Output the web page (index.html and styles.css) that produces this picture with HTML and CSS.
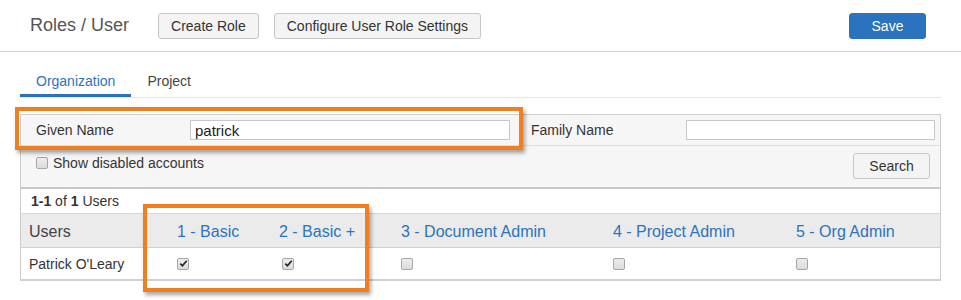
FILE: index.html
```html
<!DOCTYPE html>
<html>
<head>
  <title>Roles / User</title>
  <link rel="stylesheet" href="styles.css">
</head>
<body>
  <div class="page-header">
    <h1 class="page-title">Roles / User</h1>
    <button class="btn">Create Role</button>
    <button class="btn">Configure User Role Settings</button>
    <button class="btn btn-primary">Save</button>
  </div>

  <div class="tabs">
    <a class="tab active">Organization</a>
    <a class="tab">Project</a>
  </div>

  <div class="filter-panel">
    <div class="filter-row names">
      <label class="field-label">Given Name</label>
      <input class="field-input" type="text" value="patrick">
      <label class="field-label second">Family Name</label>
      <input class="field-input" type="text">
    </div>
    <div class="filter-row options">
      <label class="check-label"><span class="cb"></span>Show disabled accounts</label>
      <button class="btn btn-search">Search</button>
    </div>
  </div>

  <div class="results">
    <div class="results-count"><b>1-1</b> of <b>1</b> Users</div>
    <div class="role-grid head">
      <div class="cell user-col">Users</div>
      <div class="cell role">1 - Basic</div>
      <div class="cell role">2 - Basic +</div>
      <div class="cell role">3 - Document Admin</div>
      <div class="cell role">4 - Project Admin</div>
      <div class="cell role">5 - Org Admin</div>
    </div>
    <div class="role-grid body">
      <div class="cell user-col">Patrick O'Leary</div>
      <div class="cell"><span class="cb checked"><svg viewBox="0 0 10 10" width="9" height="9"><path d="M1.5 5.2 L3.8 7.6 L8.6 2" fill="none" stroke="#222" stroke-width="1.8"/></svg></span></div>
      <div class="cell second-cb"><span class="cb checked"><svg viewBox="0 0 10 10" width="9" height="9"><path d="M1.5 5.2 L3.8 7.6 L8.6 2" fill="none" stroke="#222" stroke-width="1.8"/></svg></span></div>
      <div class="cell"><span class="cb"></span></div>
      <div class="cell"><span class="cb"></span></div>
      <div class="cell"><span class="cb"></span></div>
    </div>
  </div>

  <!-- annotation boxes drawn over the screenshot -->
  <div class="highlight hl-name"></div>
  <div class="highlight hl-roles"></div>
</body>
</html>
```

FILE: styles.css
```css
* {
  margin: 0;
  padding: 0;
  box-sizing: border-box;
}

body {
  font-family: "Liberation Sans", Arial, sans-serif;
  font-size: 14px;
  color: #333333;
  background-color: #ffffff;
  position: relative;
  width: 961px;
  height: 300px;
  overflow: hidden;
}

.page-header {
  display: flex;
  align-items: center;
  height: 52px;
  padding: 0 35px 0 30px;
  border-bottom: 1px solid #d0d0d0;
}

.page-title {
  font-size: 18px;
  font-weight: normal;
  color: #555555;
  margin-right: 29px;
  margin-top: -1px;
}

.btn {
  font-family: "Liberation Sans", Arial, sans-serif;
  font-size: 14px;
  color: #333333;
  height: 26px;
  padding: 0 12px;
  background-color: #f4f4f4;
  border: 1px solid #c6c6c6;
  border-radius: 3px;
  margin-right: 15px;
}

.btn-primary {
  margin-left: auto;
  margin-right: 0;
  width: 77px;
  background-color: #2b73bf;
  border-color: #2b73bf;
  color: #ffffff;
}

.tabs {
  display: flex;
  margin: 0 20px;
  padding-top: 21px;
  border-bottom: 1px solid #e6e6e6;
}

.tab {
  line-height: 17px;
  padding: 0 16px 4px;
  border-bottom: 3px solid transparent;
  color: #444444;
}

.tab.active {
  color: #2b73bf;
  border-bottom-color: #2b73bf;
}

.filter-panel {
  margin: 16px 20px 0;
  border: 1px solid #cccccc;
  border-bottom: 2px solid #c8c8c8;
  background-color: #f6f6f6;
}

.filter-row.names {
  display: grid;
  grid-template-columns: 169px 320px 176px 249px;
  align-items: center;
  height: 31px;
  border-bottom: 1px solid #dddddd;
}

.field-label {
  padding-left: 15px;
  color: #333333;
}

.field-label.second {
  padding-left: 21px;
}

.field-input {
  height: 20px;
  border: 1px solid #c8c8c8;
  background-color: #ffffff;
  font-family: "Liberation Sans", Arial, sans-serif;
  font-size: 15px;
  color: #222222;
  padding: 0 4px;
  outline: none;
}

.filter-row.options {
  display: flex;
  justify-content: space-between;
  align-items: flex-start;
  height: 41px;
  padding: 7px 10px 0 15px;
}

.check-label {
  display: flex;
  align-items: center;
  gap: 5px;
  margin-top: 2px;
  color: #333333;
}

.btn-search {
  margin-right: 0;
  width: 77px;
}

.cb {
  display: inline-flex;
  align-items: center;
  justify-content: center;
  width: 12px;
  height: 12px;
  border: 1px solid #a6a6a6;
  border-radius: 2px;
  background: linear-gradient(#ececec, #dcdcdc);
}

.results {
  margin: 0 20px;
  border-left: 1px solid #cccccc;
  border-right: 1px solid #cccccc;
  border-bottom: 2px solid #d0d0d0;
}

.results-count {
  height: 24px;
  line-height: 25px;
  padding-left: 10px;
  font-size: 14px;
  color: #333333;
}

.role-grid {
  display: grid;
  grid-template-columns: 148px 102px 122px 212px 183px 1fr;
  align-items: center;
}

.role-grid.head {
  height: 35px;
  padding-top: 2px;
  background-color: #ebebeb;
  border-top: 1px solid #d6d6d6;
  border-bottom: 1px solid #d0d0d0;
  font-size: 16px;
}

.role-grid.body {
  height: 31px;
}

.cell {
  padding-left: 8px;
  display: flex;
  align-items: center;
}

.role {
  color: #2b73bf;
}

.head .user-col {
  color: #444444;
}

.second-cb {
  padding-left: 11px;
}

.highlight {
  position: absolute;
  border: 4px solid #ef7f1f;
  box-shadow: 2px 3px 4px rgba(0, 0, 0, 0.35);
}

.hl-name {
  left: 15px;
  top: 107px;
  width: 508px;
  height: 43px;
}

.hl-roles {
  left: 143px;
  top: 204px;
  width: 226px;
  height: 88px;
}
```
